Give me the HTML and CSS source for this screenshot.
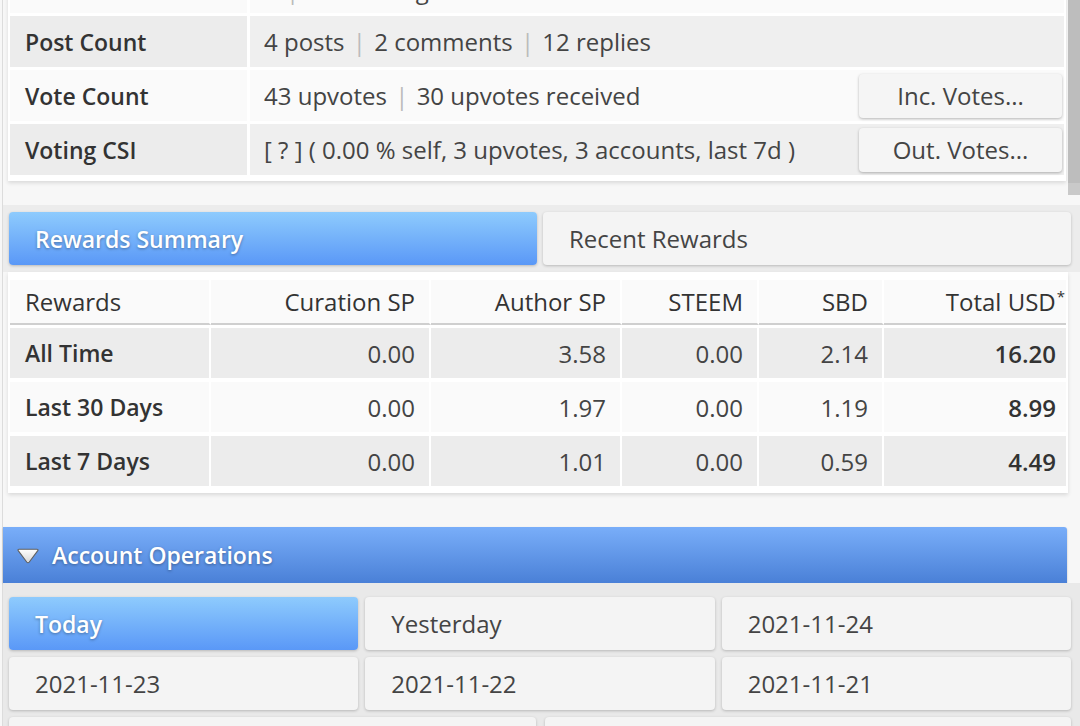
FILE: index.html
```html
<!DOCTYPE html>
<html>
<head>
<meta charset="utf-8">
<link rel="stylesheet" href="styles.css">
</head>
<body>
<div class="page">
  <div class="info-wrap">
    <div class="info-box">
      <div class="irow odd cut">
        <div class="ilabel">Followers</div>
        <div class="ivalue"><span>1 <span class="sep">|</span> 4 following</span></div>
      </div>
      <div class="irow odd2">
        <div class="ilabel">Post Count</div>
        <div class="ivalue"><span>4 posts <span class="sep">|</span> 2 comments <span class="sep">|</span> 12 replies</span></div>
      </div>
      <div class="irow even">
        <div class="ilabel">Vote Count</div>
        <div class="ivalue"><span>43 upvotes <span class="sep">|</span> 30 upvotes received</span><div class="btn">Inc. Votes...</div></div>
      </div>
      <div class="irow odd2">
        <div class="ilabel">Voting CSI</div>
        <div class="ivalue"><span>[ ? ] ( 0.00 % self, 3 upvotes, 3 accounts, last 7d )</span><div class="btn">Out. Votes...</div></div>
      </div>
    </div>
    <div class="scrollbar"><div class="thumb"></div></div>
  </div>

  <div class="tabs">
    <div class="tab active">Rewards Summary</div>
    <div class="tab">Recent Rewards</div>
  </div>

  <div class="rewards-box">
    <table class="rewards">
      <thead>
        <tr>
          <th class="first">Rewards</th>
          <th>Curation SP</th>
          <th>Author SP</th>
          <th>STEEM</th>
          <th>SBD</th>
          <th class="last">Total USD<sup>*</sup></th>
        </tr>
      </thead>
      <tbody>
        <tr class="odd">
          <td class="first">All Time</td><td>0.00</td><td>3.58</td><td>0.00</td><td>2.14</td><td class="last">16.20</td>
        </tr>
        <tr class="even">
          <td class="first">Last 30 Days</td><td>0.00</td><td>1.97</td><td>0.00</td><td>1.19</td><td class="last">8.99</td>
        </tr>
        <tr class="odd">
          <td class="first">Last 7 Days</td><td>0.00</td><td>1.01</td><td>0.00</td><td>0.59</td><td class="last">4.49</td>
        </tr>
      </tbody>
    </table>
  </div>

  <div class="ops-header">
    <svg class="tri" width="24" height="18" viewBox="0 0 24 18">
      <defs>
        <linearGradient id="tg" x1="0" y1="0" x2="0" y2="1">
          <stop offset="0" stop-color="#ffffff"/>
          <stop offset="1" stop-color="#d6d6d6"/>
        </linearGradient>
      </defs>
      <path d="M3.2 2.2 H20.8 Q22.8 2.2 21.6 3.9 L13.3 15 Q12 16.6 10.7 15 L2.4 3.9 Q1.2 2.2 3.2 2.2 Z" fill="url(#tg)" stroke="#5f5f5f" stroke-width="1.1"/>
    </svg>
    <span>Account Operations</span>
  </div>
  <div class="ops-panel">
    <div class="ops-grid three">
      <div class="obtn active">Today</div>
      <div class="obtn">Yesterday</div>
      <div class="obtn">2021-11-24</div>
      <div class="obtn">2021-11-23</div>
      <div class="obtn">2021-11-22</div>
      <div class="obtn">2021-11-21</div>
    </div>
    <div class="ops-grid two">
      <div class="obtn">Older</div>
      <div class="obtn">Filter</div>
    </div>
  </div>
</div>
</body>
</html>
```
FILE: styles.css
```css
html, body {
  margin: 0;
  padding: 0;
}
body {
  background: #f7f7f7;
  font-family: "Open Sans", "Noto Sans", sans-serif;
  font-size: 24px;
  color: #444;
  width: 1080px;
  height: 726px;
  overflow: hidden;
}
.page {
  border-left: 1px solid #dcdcdc;
  margin-left: 2px;
  margin-top: -35px;
  min-height: 900px;
}

/* info box */
.info-wrap {
  display: flex;
  align-items: flex-start;
}
.info-box {
  flex: 1;
  margin-left: 5px;
  background: #ffffff;
  padding: 0 2px 6px 2px;
  box-shadow: 0 2px 4px rgba(0,0,0,0.12);
  display: flex;
  flex-direction: column;
  gap: 3px;
}
.irow {
  display: flex;
  height: 51px;
  gap: 3px;
}
.irow.cut {
  height: 48px;
}
.ilabel {
  width: 222px;
  flex: none;
  padding-left: 15px;
  display: flex;
  align-items: center;
  font-weight: 600;
  font-size: 23px;
  color: #333;
}
.ivalue {
  flex: 1;
  padding-left: 14px;
  padding-right: 2px;
  display: flex;
  align-items: center;
  justify-content: space-between;
}
.irow.odd .ilabel, .irow.odd .ivalue { background: #fafafa; }
.irow.odd2 .ilabel { background: #ececec; }
.irow.odd2 .ivalue { background: #efefef; }
.irow.even .ilabel, .irow.even .ivalue { background: #fafafa; }
.sep {
  color: #bbb;
  padding: 0 2px;
}
.btn {
  width: 203px;
  height: 44px;
  background: #f5f5f5;
  border-radius: 4px;
  box-shadow: 0 1px 3px rgba(0,0,0,0.28);
  display: flex;
  align-items: center;
  justify-content: center;
  color: #444;
}
.scrollbar {
  width: 12px;
  height: 230px;
  background: #c9c9c9;
  margin-left: 2px;
}
.thumb {
  height: 218px;
  background: #bdbdbd;
}

/* tabs */
.tabs {
  margin-top: 10px;
  background: #ececec;
  padding: 7px 9px 7px 6px;
  display: flex;
  gap: 6px;
}
.tab {
  flex: 1;
  height: 53px;
  border-radius: 4px;
  background: #f4f4f4;
  box-shadow: 0 1px 3px rgba(0,0,0,0.22);
  display: flex;
  align-items: center;
  padding-left: 26px;
  color: #444;
}
.tab.active {
  background: linear-gradient(#8ecbfd, #5a98f7);
  color: #fff;
  font-weight: 600;
  font-size: 23px;
  text-shadow: 0 1px 3px rgba(0,0,0,0.35);
}

/* rewards table */
.rewards-box {
  margin-left: 5px;
  margin-right: 12px;
  background: #fff;
  padding: 8px 2px 6px 2px;
  box-shadow: 0 2px 4px rgba(0,0,0,0.12);
}
.rewards {
  width: 100%;
  border-collapse: separate;
  border-spacing: 0;
  table-layout: fixed;
}
.rewards th, .rewards td {
  box-sizing: border-box;
  text-align: right;
  padding: 0 14px;
  border-right: 2px solid #fff;
  white-space: nowrap;
}
.rewards td.last { border-right: none; padding-right: 10px; }
.rewards th.last { border-right: none; padding-right: 1px; }
.rewards th {
  height: 45px;
  background: #fafafa;
  font-weight: 400;
  color: #333;
  border-bottom: 2px solid #cfcfcf;
}
.rewards th:nth-child(1) { width: 201px; }
.rewards th:nth-child(2) { width: 220px; }
.rewards th:nth-child(3) { width: 191px; }
.rewards th:nth-child(4) { width: 137px; }
.rewards th:nth-child(5) { width: 125px; }
.rewards .first {
  text-align: left;
  padding-left: 15px;
  padding-right: 10px;
}
.rewards td {
  height: 54px;
  border-top: 3px solid #fff;
  border-bottom: 1px solid #fff;
}
.rewards tr.odd td { background: #ececec; }
.rewards tr.even td { background: #fafafa; }
.rewards td.first { font-weight: 600; font-size: 23px; color: #333; }
.rewards td.last { font-weight: 600; color: #333; }
.rewards sup {
  font-size: 15px;
  vertical-align: top;
  position: relative;
  top: 1px;
  margin-left: 1px;
}

/* account operations */
.ops-header {
  margin-top: 34px;
  margin-right: 13px;
  height: 56px;
  border-radius: 0 3px 0 0;
  background: linear-gradient(#79aef9, #4a80d7);
  box-shadow: 0 1px 2px rgba(0,0,0,0.25);
  display: flex;
  align-items: center;
  color: #fff;
  font-weight: 600;
  font-size: 23px;
  text-shadow: 0 1px 3px rgba(0,0,0,0.35);
}
.tri {
  margin-left: 13px;
  margin-right: 12px;
  margin-top: 1px;
}
.ops-panel {
  background: #e9e9e9;
  padding: 14px 9px 10px 6px;
  display: flex;
  flex-direction: column;
  gap: 7px;
}
.ops-grid {
  display: grid;
  gap: 7px;
}
.ops-grid.three { grid-template-columns: repeat(3, 1fr); }
.ops-grid.two { grid-template-columns: repeat(2, 1fr); gap: 9px; }
.obtn {
  height: 53px;
  border-radius: 4px;
  background: #f4f4f4;
  box-shadow: 0 1px 3px rgba(0,0,0,0.22);
  display: flex;
  align-items: center;
  padding-left: 26px;
  color: #444;
}
.obtn.active {
  background: linear-gradient(#8ecbfd, #5a98f7);
  color: #fff;
  font-weight: 600;
  font-size: 23px;
  text-shadow: 0 1px 3px rgba(0,0,0,0.35);
}
```
